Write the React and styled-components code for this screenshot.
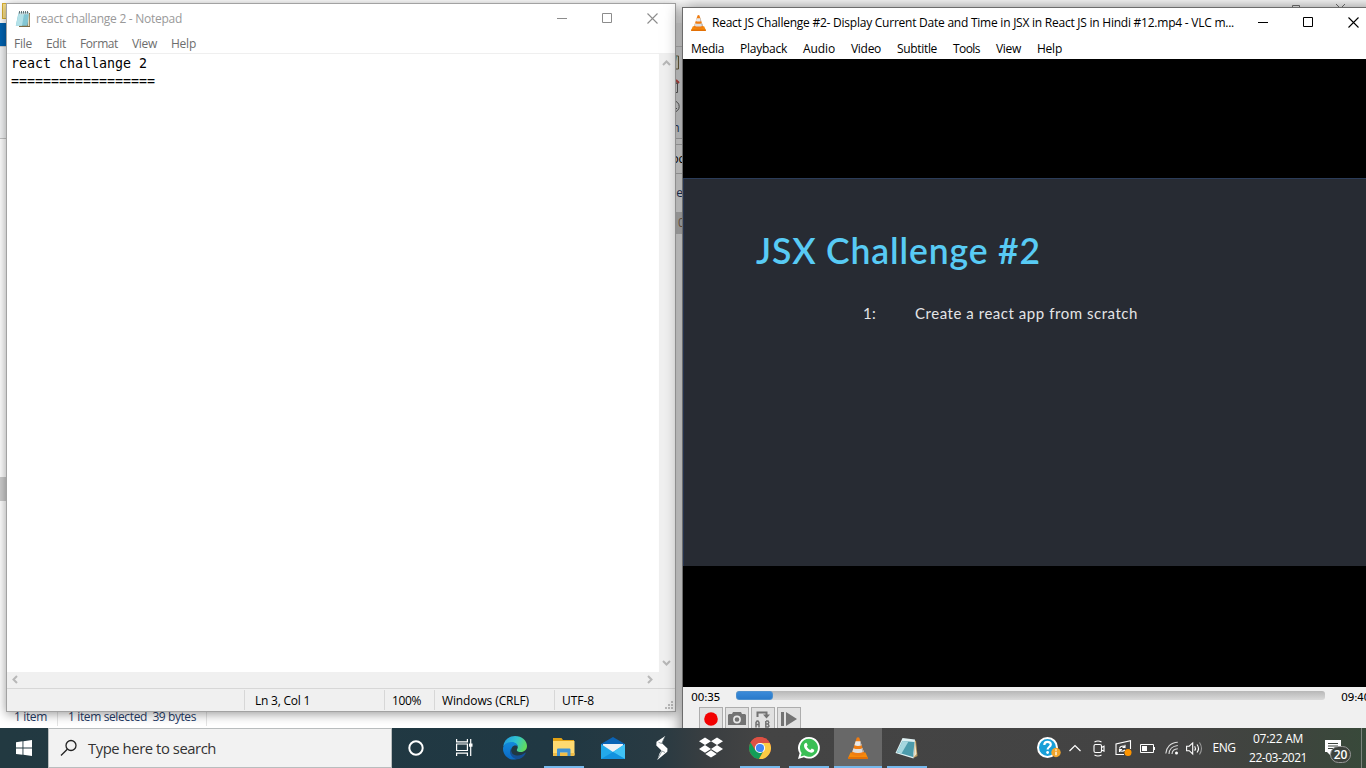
import React, { useLayoutEffect, useRef, useState } from "react";
import styled, { createGlobalStyle } from "styled-components";

const Global = createGlobalStyle`
  * { box-sizing: border-box; }
  html, body { margin: 0; width: 1366px; height: 768px; overflow: hidden; }
  body { font: 12px/16px "Open Sans", "Noto Sans", sans-serif; color: #000; }
  svg { display: block; flex: none; }
`;

const LabelText = styled.span`
  display: inline-block;
  flex: none;
  white-space: pre;
  color: ${(p) => p.$color || "inherit"};
  font-family: ${(p) => p.$font || "inherit"};
  font-size: ${(p) => p.$size || 12}px;
  font-weight: ${(p) => p.$weight || 400};
`;

/* Text tracked so that it fills the given width. */
function Label({ width, children, ...rest }) {
  const ref = useRef(null);
  const [spacing, setSpacing] = useState(0);
  useLayoutEffect(() => {
    const natural = ref.current.getBoundingClientRect().width;
    setSpacing((width - natural) / children.length);
  }, []);
  return (
    <LabelText ref={ref} style={{ letterSpacing: `${spacing}px` }} {...rest}>
      {children}
    </LabelText>
  );
}

const Desktop = styled.div`
  position: relative;
  width: 1366px;
  height: 768px;
  overflow: hidden;
  display: flex;
  flex-direction: column;
`;

/* ---------- File Explorer, behind the other windows ---------- */
const Explorer = styled.section`
  height: 728px;
  display: flex;
  flex-direction: column;
  background: #fff;
  color: #1f3a66;
`;
const ExplorerTitle = styled.div`
  height: 23px;
  display: flex;
  justify-content: space-between;
  padding: 3px 20px 0 2px;
  background: #fff;
`;
const FolderTab = styled.div`
  width: 14px;
  height: 16px;
  background: #fbe28c;
  border: 1px solid #d9b032;
`;
const CaptionHints = styled.div`
  display: flex;
  gap: 36px;
`;
const RibbonTabs = styled.div`
  height: 23px;
  display: flex;
  background: #f7f7f7;
`;
const FileTab = styled.div`
  width: 56px;
  background: #0063b1;
`;
const Ribbon = styled.div`
  height: 93px;
  padding: 8px 0 0 667px;
  display: flex;
  flex-direction: column;
  align-items: flex-start;
  gap: 7px;
  background: #f4f5f6;
  border-top: 1px solid #d0d0d0;
  border-bottom: 1px solid #c4c4c4;
`;
const ExplorerRow = styled.div`
  height: ${(p) => p.$h}px;
  display: flex;
  align-items: center;
  margin-left: 600px;
  padding-left: ${(p) => p.$inset || 67}px;
  color: ${(p) => p.$color || "#1f3a66"};
  background: ${(p) => p.$bg || "#fff"};
  border-bottom: ${(p) => (p.$line ? "1px solid #c8c8c8" : "0")};
`;
const ExplorerList = styled.div`
  flex: 1;
  display: flex;
  flex-direction: column;
  padding-top: 243px;
`;
const ScrollThumb = styled.div`
  width: 8px;
  height: 24px;
  background: #cdcdcd;
`;
const ExplorerStatus = styled.footer`
  height: 22px;
  display: flex;
  align-items: center;
  padding-left: 14px;
  background: #fff;
`;
const StatusDivider = styled.i`
  width: 1px;
  height: 18px;
  background: #e4e4e4;
  margin: 0 10px 0 10px;
`;

function ExplorerWindow() {
  return (
    <Explorer>
      <ExplorerTitle>
        <FolderTab />
        <CaptionHints>
          <svg width="10" height="10" fill="none" stroke="#777"><path d="M.5 9.500v-7h7v7M2.500 2.500v-2h7v7" transform="translate(0 2)" /></svg>
          <svg width="10" height="10" stroke="#777"><path d="M0 1l9 9M9 1l-9 9" /></svg>
        </CaptionHints>
      </ExplorerTitle>
      <RibbonTabs><FileTab /></RibbonTabs>
      <Ribbon>
        <svg width="12" height="15"><path d="M1 1h10.500v13H1z" fill="#f3efdf" stroke="#7b6b43" /><path d="M1 1h9L7.500 14H1z" fill="#6fbccb" /></svg>
        <svg width="13" height="16" fill="none" stroke="#666"><path d="M1 5h9.500v10.500H1z" fill="#f4f4f4" /><path d="M3 1l6 4M8 8l3.500-4" /><path d="M9 3l3 3" stroke="#d0504b" strokeWidth="2" /></svg>
        <svg width="13" height="13" fill="none" stroke="#666"><circle cx="6.500" cy="6.500" r="5.700" /><path d="M5 9l4-4M8 8.500h2" /></svg>
        <Label width={11}>en</Label>
      </Ribbon>
      <ExplorerRow $h={6} $line />
      <ExplorerRow $h={29} $line $color="#000"><Label width={17}>roc</Label></ExplorerRow>
      <ExplorerRow $h={38}><Label width={17}>fie</Label></ExplorerRow>
      <ExplorerRow $h={22} $inset={78} $bg="#cfcfcf" $color="#8a6b52"><Label width={7}>0</Label></ExplorerRow>
      <ExplorerList><ScrollThumb /></ExplorerList>
      <ExplorerStatus>
        <Label width={33}>1 item</Label>
        <StatusDivider />
        <Label width={79}>1 item selected</Label>
        <Label width={49}>{"  39 bytes"}</Label>
        <StatusDivider />
      </ExplorerStatus>
    </Explorer>
  );
}

/* ---------- Shared window chrome ---------- */
const Window = styled.section`
  position: absolute;
  left: ${(p) => p.$x}px;
  top: ${(p) => p.$y}px;
  width: ${(p) => p.$w}px;
  height: ${(p) => p.$h}px;
  display: flex;
  flex-direction: column;
  background: #fff;
  border: 1px solid ${(p) => p.$edge};
  box-shadow: 0 ${(p) => p.$drop}px ${(p) => p.$blur}px rgba(0, 0, 0, ${(p) => p.$shade});
`;
const TitleBar = styled.header`
  height: 30px;
  flex: none;
  display: flex;
  align-items: center;
  padding-left: 8px;
  gap: ${(p) => p.$gap}px;
  color: ${(p) => p.$color};
`;
const Caption = styled.div`
  display: flex;
  align-items: center;
  margin: 0 0 1px auto;
  gap: 35px;
  padding-right: ${(p) => p.$end}px;
`;
const MenuBar = styled.nav`
  display: flex;
  align-items: center;
  height: ${(p) => p.$h}px;
  flex: none;
  padding-left: ${(p) => p.$inset}px;
  gap: ${(p) => p.$gap}px;
  color: ${(p) => p.$color};
`;

function CaptionButtons({ color, end }) {
  return (
    <Caption $end={end}>
      <svg width="10" height="11" stroke={color}><path d="M0 5.500h10" /></svg>
      <svg width="10" height="11" stroke={color} fill="none"><path d="M.5.500h9v9h-9z" /></svg>
      <svg width="11" height="11" stroke={color} strokeWidth="1.100"><path d="M.5.500l10 10M10.500.500l-10 10" /></svg>
    </Caption>
  );
}

/* ---------- Notepad ---------- */
const Editor = styled.div`
  flex: 1;
  display: flex;
  border-top: 1px solid #efefef;
`;
const Paper = styled.div`
  flex: 1;
  padding: 1px 0 0 4px;
  display: flex;
  flex-direction: column;
  align-items: flex-start;
  line-height: 18px;
`;
const VerticalScroll = styled.div`
  width: 16px;
  display: flex;
  flex-direction: column;
  justify-content: space-between;
  align-items: center;
  padding: 5px 1px 5px 0;
  background: #f0f0f0;
`;
const HorizontalScroll = styled.div`
  height: 16px;
  flex: none;
  display: flex;
  justify-content: space-between;
  align-items: center;
  padding: 0 21px 1px 4px;
  background: #f0f0f0;
`;
const NoteStatus = styled.footer`
  height: 23px;
  flex: none;
  display: flex;
  align-items: stretch;
  background: #f0f0f0;
  border-top: 1px solid #d7d7d7;
`;
const StatusCell = styled.div`
  width: ${(p) => p.$w}px;
  margin: 1px 0;
  padding-top: 2px;
  padding-left: ${(p) => p.$inset || 7}px;
  display: flex;
  align-items: center;
  border-right: ${(p) => (p.$last ? "0" : "1px solid #d7d7d7")};
`;
const Grip = styled.div`
  flex: 1;
  display: flex;
  justify-content: flex-end;
  align-items: flex-end;
  padding: 0 2px 2px 0;
`;

const arrowPaths = {
  up: "M1 6l3.500-3.500L8 6",
  down: "M1 3l3.500 3.500L8 3",
  left: "M6 1L2.500 4.500 6 8",
  right: "M3 1l3.500 3.500L3 8",
};
function Arrow({ dir }) {
  return <svg width="9" height="9" fill="none" stroke="#b8b8b8" strokeWidth="2"><path d={arrowPaths[dir]} /></svg>;
}

function NotepadIcon({ size }) {
  return (
    <svg width={size} height={size} viewBox="0 0 16 16">
      <path d="M4 2h11v14H4z" fill="#7d6b45" />
      <path d="M13 2l1.300 1v12H13z" fill="#e5dcc0" />
      <path d="M3.500 1.500H14L12.500 14.800H.8z" fill="#83c6d3" />
      <path d="M3.500 3H9L7 14.800H.8z" fill="#b3e1e8" />
      <path d="M3.500 1.500H14l-.2 1.800H3.200z" fill="#c9d8da" />
      <path d="M4.500 0v2.500M6.500 0v2.500M8.500 0v2.500M10.500 0v2.500M12.500 0v2.500" stroke="#43555a" strokeWidth=".8" />
    </svg>
  );
}

const MONO = '"DejaVu Sans Mono", monospace';

function Notepad() {
  return (
    <Window $x={6} $y={3} $w={670} $h={709} $edge="#a2a2a2" $drop={2} $blur={10} $shade={0.4}>
      <TitleBar $gap={5} $color="#999">
        <NotepadIcon size={16} />
        <Label width={146}>react challange 2 - Notepad</Label>
        <CaptionButtons color="#8c8c8c" end={17} />
      </TitleBar>
      <MenuBar $h={19} $inset={7} $gap={14} $color="#6d6d6d">
        <Label width={18}>File</Label>
        <Label width={20}>Edit</Label>
        <Label width={38}>Format</Label>
        <Label width={25}>View</Label>
        <Label width={25}>Help</Label>
      </MenuBar>
      <Editor>
        <Paper>
          <Label width={136} $font={MONO} $size={13.3}>react challange 2</Label>
          <Label width={144} $font={MONO} $size={13.3}>==================</Label>
        </Paper>
        <VerticalScroll><Arrow dir="up" /><Arrow dir="down" /></VerticalScroll>
      </Editor>
      <HorizontalScroll><Arrow dir="left" /><Arrow dir="right" /></HorizontalScroll>
      <NoteStatus>
        <StatusCell $w={238} />
        <StatusCell $w={140} $inset={10}><Label width={55}>Ln 3, Col 1</Label></StatusCell>
        <StatusCell $w={50}><Label width={29}>100%</Label></StatusCell>
        <StatusCell $w={120}><Label width={87}>Windows (CRLF)</Label></StatusCell>
        <StatusCell $w={60} $last><Label width={32}>UTF-8</Label></StatusCell>
        <Grip>
          <svg width="8" height="8" fill="#b9b9b9">
            <path d="M6 0h2v2H6zM3 3h2v2H3zM6 3h2v2H6zM0 6h2v2H0zM3 6h2v2H3zM6 6h2v2H6z" />
          </svg>
        </Grip>
      </NoteStatus>
    </Window>
  );
}

/* ---------- VLC ---------- */
const Video = styled.div`
  height: 628px;
  flex: none;
  display: flex;
  align-items: flex-start;
  padding-top: 119px;
  background: #000;
`;
const Slide = styled.div`
  width: 100%;
  height: 388px;
  display: flex;
  flex-direction: column;
  align-items: flex-start;
  padding: 47px 0 0 72px;
  background: #272b33;
  border-top: 1px solid #2b3c59;
  border-left: 1px solid #263450;
`;
const Heading = styled.h1`
  margin: 0;
  height: 50px;
  display: flex;
  align-items: center;
  line-height: 50px;
  font-weight: 400;
`;
const Step = styled.div`
  display: flex;
  align-items: center;
  gap: 39px;
  margin-top: 27px;
  padding-left: 107px;
  line-height: 20px;
`;
const Controls = styled.div`
  flex: 1;
  background: #f0f0f0;
`;
const SeekRow = styled.div`
  height: 20px;
  display: flex;
  align-items: center;
  padding-left: 8px;
  padding-top: 1px;
  gap: 16px;
`;
const SeekTrack = styled.div`
  width: 589px;
  height: 9px;
  margin-top: -4px;
  flex: none;
  border-radius: 3px;
  background: linear-gradient(#b7b7b7, #dadada);
`;
const SeekFill = styled.div`
  width: 37px;
  height: 9px;
  border-radius: 3px;
  background: linear-gradient(#3a8ad8, #2a7bcb);
  border: 1px solid #4b8fce;
`;
const ToolRow = styled.div`
  display: flex;
  gap: 2px;
  padding-left: 16px;
`;
const Tool = styled.div`
  width: 24px;
  height: 24px;
  display: flex;
  align-items: center;
  justify-content: center;
  background: #e1e1e1;
  border: 1px solid #adadad;
`;

function Cone({ width, height }) {
  return (
    <svg width={width} height={height} viewBox="0 0 20 22" preserveAspectRatio="none">
      <path d="M2.500 15.500h15l2.300 5.200q.2 1.300-1 1.300H1.200q-1.200 0-1-1.300z" fill="#f58a0b" />
      <path d="M.5 20h19l.4 1.500-.8.500H.9l-.8-.5z" fill="#e27006" />
      <path d="M8.700.8Q10-.5 11.300.8l5.200 16.400q-6.500 3.600-13 0z" fill="#f07d12" />
      <path d="M7.600 4.300h4.800l1.200 3.900q-3.600 1.500-7.200 0z" fill="#e9e9e9" />
      <path d="M5.400 11.200q4.600 1.700 9.200 0l1.100 3.500q-5.700 2.500-11.400 0z" fill="#dedede" />
      <path d="M12 4.300h.4l1.200 3.900-1 .4zM13.600 11.600l1-.4 1.100 3.500-1.200.5z" fill="#aaa" />
    </svg>
  );
}

const UI = '"DejaVu Sans", sans-serif';
const TITLE = "React JS Challenge #2- Display Current Date and Time in JSX in React JS in Hindi #12.mp4 - VLC m...";

function Vlc() {
  return (
    <Window $x={682} $y={7} $w={700} $h={740} $edge="#6c6c6c" $drop={1} $blur={16} $shade={0.55}>
      <TitleBar $gap={6} $color="#000">
        <Cone width={15} height={16} />
        <Label width={522}>{TITLE}</Label>
        <CaptionButtons color="#000" end={22} />
      </TitleBar>
      <MenuBar $h={21} $inset={8} $gap={16} $color="#000">
        <Label width={33}>Media</Label>
        <Label width={47}>Playback</Label>
        <Label width={32}>Audio</Label>
        <Label width={30}>Video</Label>
        <Label width={40}>Subtitle</Label>
        <Label width={27}>Tools</Label>
        <Label width={25}>View</Label>
        <Label width={25}>Help</Label>
      </MenuBar>
      <Video>
        <Slide>
          <Heading><Label width={285} $font="Lato, sans-serif" $size={35.5} $weight={600} $color="#58cbf5">JSX Challenge #2</Label></Heading>
          <Step>
            <Label width={13} $font="Lato, sans-serif" $size={15} $color="#e4e4e6">1:</Label>
            <Label width={223} $font="Lato, sans-serif" $size={15} $color="#e4e4e6">Create a react app from scratch</Label>
          </Step>
        </Slide>
      </Video>
      <Controls>
        <SeekRow>
          <Label width={29} $font={UI} $size={11}>00:35</Label>
          <SeekTrack><SeekFill /></SeekTrack>
          <Label width={29} $font={UI} $size={11}>09:40</Label>
        </SeekRow>
        <ToolRow>
          <Tool><svg width="14" height="14"><circle cx="7" cy="7" r="6.800" fill="#f20000" /></svg></Tool>
          <Tool>
            <svg width="18" height="16" viewBox="0 0 18 16"><path d="M5 1h8l1 2h3l1 1v10H0V4l1-1h3z" fill="#737373" /><circle cx="9" cy="8.500" r="3.100" fill="none" stroke="#e8e8e8" strokeWidth="1.600" /></svg>
          </Tool>
          <Tool>
            <svg width="16" height="17" viewBox="0 0 16 17" fill="none" stroke="#737373" strokeWidth="1.500">
              <path d="M2.500 6V1.500h9v3" strokeWidth="2" /><path d="M8 3.500h7l-3.500 4z" fill="#737373" stroke="none" />
              <path d="M1 16.500v-5l1-1.500h1l1 1.500v5M1 13.500h3M10.800 10v6h2.400l.8-1-.8-2h-2.400M11 10h2l.8 1.500-.8 1.500" />
            </svg>
          </Tool>
          <Tool><svg width="16" height="14" fill="#737373"><path d="M0 0h3v14H0zM5 0l11 7-11 7z" /></svg></Tool>
        </ToolRow>
      </Controls>
    </Window>
  );
}

/* ---------- Taskbar ---------- */
const Bar = styled.footer`
  position: relative;
  height: 40px;
  display: flex;
  color: #fff;
  background: linear-gradient(90deg, #223941 0, #203843 560px, #293a42 660px, #393e41 705px, #444 760px, #434343 1180px, #3f443e 1280px, #38493a 1366px);
`;
const Start = styled.div`
  width: 48px;
  display: flex;
  align-items: center;
  justify-content: center;
`;
const Search = styled.div`
  width: 344px;
  display: flex;
  align-items: center;
  gap: 10px;
  padding-left: 11px;
  background: #f2f2f2;
  border: 1px solid #b9bdbe;
  color: #333;
`;
const Task = styled.div`
  width: ${(p) => p.$w || 40}px;
  margin-left: ${(p) => p.$gap ?? 9}px;
  display: flex;
  align-items: center;
  justify-content: center;
  padding-top: 1px;
  background: ${(p) => (p.$active ? "#686868" : "transparent")};
  border-bottom: 2px solid ${(p) => (p.$open ? "#76b9ed" : "transparent")};
`;
const Tray = styled.div`
  flex: 1;
  display: flex;
  align-items: center;
  padding-left: 110px;
`;
const TrayItem = styled.div`
  width: ${(p) => p.$w}px;
  flex: none;
  display: flex;
  justify-content: center;
`;
const Clock = styled.div`
  width: 84px;
  margin-left: -10px;
  flex: none;
  height: 36px;
  display: flex;
  flex-direction: column;
  justify-content: space-between;
  align-items: center;
  line-height: 17px;
`;
const Notifications = styled.div`
  position: relative;
  width: 26px;
  height: 24px;
  margin: 7px 0 0 5px;
`;
const Count = styled.span`
  position: absolute;
  left: 5px;
  top: 6px;
  width: 21px;
  height: 17px;
  border-radius: 9px;
  border: 1px solid #999;
  background: #3d423d;
  font-size: 12px;
  font-weight: 600;
  line-height: 15px;
  text-align: center;
`;
const ShowDesktop = styled.div`
  width: 1px;
  height: 40px;
  margin-left: auto;
  margin-right: 4px;
  background: #7c837c;
`;

function EdgeIcon() {
  return (
    <svg width="24" height="24" viewBox="0 0 24 24">
      <defs>
        <linearGradient id="edgeTop" x1="0" y1=".3" x2="1" y2=".6"><stop stopColor="#219be0" /><stop offset=".5" stopColor="#31c4cf" /><stop offset="1" stopColor="#64dc55" /></linearGradient>
        <linearGradient id="edgeLow" x1="0" y1="0" x2="0" y2="1"><stop stopColor="#128bdd" /><stop offset="1" stopColor="#0c69c4" /></linearGradient>
      </defs>
      <path d="M.2 10.500C1 4 6 0 12 0c7 0 12 4.600 12 10 0 3.600-2.700 6-6.200 6-3.500 0-4-1.300-4-2 0-.8 1-1.200 1-3 0-2.200-2.500-4.200-6-4.200-4 0-7 1.700-8.600 3.700z" fill="url(#edgeTop)" />
      <path d="M.1 11.500C.8 8.300 4.200 6 8.600 6c4 0 6.300 2.500 6.300 5-1-2-4.500-1.800-5.900.4-2.500 4 .3 9.600 5.500 11.300C6.500 26-.9 19 .1 11.500z" fill="url(#edgeLow)" />
      <path d="M8.800 11.800C7 15 8.600 18.500 12.500 19.300c4 .8 7.400-1 9.400-2.600.6-.3 1 .1.700.7-2 3.700-5.400 6-9.400 5.800-5.500-1.700-8.200-7.500-4.400-11.400z" fill="#154f93" />
    </svg>
  );
}

function Taskbar() {
  return (
    <Bar>
      <Start>
        <svg width="16" height="16" fill="#fff"><path d="M0 2.200L6.500 1.300v6.300H0zM7.400 1.200L16 0v7.600H7.400zM0 8.500h6.500v6.300L0 13.900zM7.400 8.500H16V16l-8.600-1.200z" /></svg>
      </Start>
      <Search>
        <svg width="18" height="18" fill="none" stroke="#222" strokeWidth="1.300"><circle cx="11" cy="6.500" r="5" /><path d="M7.300 10.200L1 16.500" /></svg>
        <Label width={128} $size={14.8}>Type here to search</Label>
      </Search>
      <Task $gap={4}><svg width="16" height="16"><circle cx="8" cy="8" r="6.700" fill="none" stroke="#fff" strokeWidth="2" /></svg></Task>
      <Task $gap={8}>
        <svg width="17" height="17" fill="none" stroke="#fff" strokeWidth="1.200"><path d="M.6 0v2.800h10.800V0M.6 5h10.800v6.500H.6zM.6 17v-2.800h10.800V17M14.700 0v17" /><path d="M13 4.500h3.500v3.200H13z" fill="#fff" stroke="none" /></svg>
      </Task>
      <Task $gap={11}><EdgeIcon /></Task>
      <Task $open>
        <svg width="22" height="19" viewBox="0 0 22 19"><path d="M0 0h8.500l1.500 2h11v16H0z" fill="#e3a214" /><path d="M0 3h21.500v14.500H0z" fill="#ffda70" /><path d="M0 15h21.500v2.500H0z" fill="#f0bd48" /><path d="M4 18v-6.500q0-1 1-1h11.500q1 0 1 1V18h-3v-3.500H7V18z" fill="#3f92d4" /></svg>
      </Task>
      <Task>
        <svg width="24" height="24" viewBox="0 0 24 24"><path d="M0 8L12 1l12 7v3H0z" fill="#0b63b5" /><path d="M2 8h20v8H2z" fill="#f0f1f5" /><path d="M0 8l12 8 12-8v15H0z" fill="#23a9ea" /><path d="M12 16L24 8v15z" fill="#40c2f5" /><path d="M12 16L24 23H0z" fill="#1292df" /></svg>
      </Task>
      <Task>
        <svg width="14" height="24" viewBox="0 0 14 24" fill="#fff"><path d="M10.300 0L1.500 5.800 1.300 9.500 6.500 14.500 4.500 17.500 2.300 24 12.300 15.800 12.500 12.500 7 7.300z" /><path d="M9.800 1L6.500 7.500l-3-1.200M3 22.500l4-7.500 3 1.500" fill="none" stroke="#243a43" strokeWidth=".5" /></svg>
      </Task>
      <Task>
        <svg width="24" height="21" viewBox="0 0 24 21" fill="#fff"><path d="M6 .5l6 3.800-6 3.800L0 4.300zM18 .5l6 3.800-6 3.800-6-3.800zM6 8.100l6 3.800-6 3.800-6-3.800zM18 8.100l6 3.800-6 3.800-6-3.800zM12 13.200l5.700 3.700L12 20.500l-5.700-3.600z" /></svg>
      </Task>
      <Task $open>
        <svg width="22" height="22" viewBox="0 0 22 22"><circle cx="11" cy="11" r="11" fill="#db4437" /><path d="M11 11L1.500 5.500A11 11 0 0 0 10 22l4.500-8z" fill="#139d58" /><path d="M11 11l3.500 3L10 22A11 11 0 0 0 20.700 6H11z" fill="#fccb45" /><path d="M11 6h9.700A11 11 0 0 0 1.500 5.500l5 8z" fill="#dd5144" /><circle cx="11" cy="11" r="5.100" fill="#fff" /><circle cx="11" cy="11" r="4.100" fill="#4286f5" /></svg>
      </Task>
      <Task $open>
        <svg width="22" height="22" viewBox="0 0 22 22"><path d="M11 0a10.800 10.800 0 1 1-5.100 20.300L0 22l1.600-5.700A10.800 10.800 0 0 1 11 0z" fill="#fff" /><path d="M11 1.800a9 9 0 1 1-4.700 16.700l-3.700 1 1-3.600A9 9 0 0 1 11 1.800z" fill="#3abf55" /><path d="M7.500 6q.9-.6 1.300.2l.9 2.100-.9 1.400c1 1.700 2 2.500 3.600 3.200l1.400-1.400 2.400 1.200c.3 1.900-1.300 3-3 3C9.400 15 6 11.500 6 8.700 6 7.500 6.600 6.600 7.500 6z" fill="#fff" /></svg>
      </Task>
      <Task $w={48} $gap={5} $open $active><Cone width={20} height={22} /></Task>
      <Task $gap={5} $open>
        <svg width="24" height="22" viewBox="0 0 24 22"><path d="M19 3l2 1 1.500 15-4 2z" fill="#b9975c" /><path d="M20 4l1.500 13-2.500 3z" fill="#eee6cf" /><path d="M7.500 1L20 2.500l-1.500 19L.5 16z" fill="#dff1f3" /><path d="M7.500 4l12 1-1.500 15L2 15.200z" fill="#4c9bab" /><path d="M7.500 4l6 .5L6.500 16.500 2 15.200z" fill="#a5d6de" /></svg>
      </Task>
      <Tray>
        <TrayItem $w={24}>
          <svg width="24" height="22" viewBox="0 0 24 22"><circle cx="10.500" cy="10.500" r="9.500" fill="#189fd8" stroke="#fff" strokeWidth="2" /><path d="M7.300 8c0-4.300 6.500-4 6.500-.5 0 2.500-3.200 2.500-3.200 5" fill="none" stroke="#fff" strokeWidth="2.200" /><circle cx="10.600" cy="15.500" r="1.400" fill="#fff" /><circle cx="19" cy="15.500" r="4.700" fill="#f2a52b" /><path d="M19 12.300v1.500M19 14.700v3.500" stroke="#fff" strokeWidth="1.300" /></svg>
        </TrayItem>
        <TrayItem $w={28}><svg width="12" height="8" fill="none" stroke="#fff" strokeWidth="1.200"><path d="M.5 7L6 1.500 11.500 7" /></svg></TrayItem>
        <TrayItem $w={20}>
          <svg width="12" height="17" fill="none" stroke="#fff" strokeWidth="1.100"><rect x="1" y="4.500" width="7.500" height="8" rx="1.500" /><path d="M8.500 7.500l2.500-1.300v5L8.500 10M1.500 2q3.500-2 7 0M1.500 15q3.500 2 7 0" /></svg>
        </TrayItem>
        <TrayItem $w={28}>
          <svg width="17" height="17" fill="none" stroke="#fff" strokeWidth="1.100"><path d="M9 14.500H1V4L15.500.8V9M1 14.500V4" /><path d="M4.500 8.500q.5-2.500 4-2.500L10 7.500M10 4.800v2.700H7.500M4.500 12V9.500H7M4.500 10q2.500 2.500 5.500 0" /><circle cx="13" cy="12.500" r="3.500" fill="#ff9500" stroke="none" /></svg>
        </TrayItem>
        <TrayItem $w={20}><svg width="15" height="9" fill="none" stroke="#fff"><path d="M.5.500h13v8H.5z" /><path d="M2 2h5v5H2zM14 3h1v3h-1z" fill="#fff" stroke="none" /></svg></TrayItem>
        <TrayItem $w={30}>
          <svg width="14" height="14" fill="none" stroke="#ddd" strokeWidth="1.100"><path d="M.8 12.500C1.300 6.500 5.500 1.500 12.800 1.300M4 13C4.200 8.500 7.500 5 12.800 4.500M7 13c.2-3 2.500-5 5.800-5.200" /><circle cx="11.500" cy="12" r="1.500" fill="#fff" stroke="none" /></svg>
        </TrayItem>
        <TrayItem $w={15}>
          <svg width="17" height="15" fill="none" stroke="#fff" strokeWidth="1.100"><path d="M.6 5.200h2.600l3.500-3.300v11L3.200 9.700H.6zM8.700 5.200q1.500 2.200 0 4.500M11 3.500q3 4 0 8" /><path d="M13.500 1.500q4 6 0 12" stroke="#999" /></svg>
        </TrayItem>
        <TrayItem $w={44}><Label width={23}>ENG</Label></TrayItem>
        <Clock>
          <Label width={50}>07:22 AM</Label>
          <Label width={58}>22-03-2021</Label>
        </Clock>
        <Notifications>
          <svg width="16" height="16" viewBox="0 0 16 16"><path d="M0 0h16v12H6v4l-4-4H0z" fill="#fff" /><path d="M3 3.500h10M3 6h10M3 8.500h6" stroke="#3d443e" /></svg>
          <Count>20</Count>
        </Notifications>
        <ShowDesktop />
      </Tray>
    </Bar>
  );
}

export default function App() {
  return (
    <Desktop>
      <Global />
      <ExplorerWindow />
      <Notepad />
      <Vlc />
      <Taskbar />
    </Desktop>
  );
}
